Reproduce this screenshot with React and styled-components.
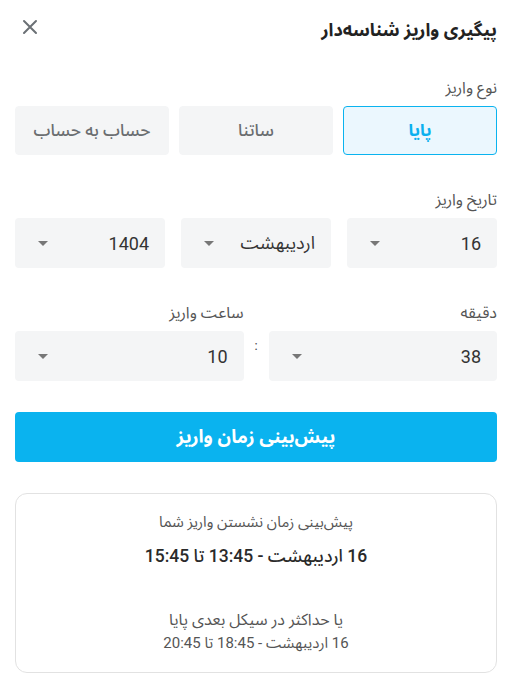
import React from "react";
import styled, { createGlobalStyle } from "styled-components";

const Global = createGlobalStyle`
  html, body { margin: 0; padding: 0; background: #fff; }
  body { font-family: Roboto, "Noto Sans Arabic", "Noto Sans Arabic UI", Vazirmatn, "Noto Naskh Arabic", sans-serif; }
  * { box-sizing: border-box; }
`;

const Page = styled.div`
  direction: rtl;
  width: 512px;
  padding: 0 15px;
  color: #333;
`;

const Header = styled.div`
  height: 60px;
  display: flex;
  align-items: center;
  justify-content: space-between;
`;

const Title = styled.h1`
  margin: 0;
  font-size: 18px;
  font-weight: 700;
  color: #222;
`;

const Close = styled.button`
  border: none;
  background: none;
  padding: 0;
  margin-left: 6px;
  width: 18px;
  height: 18px;
  display: flex;
  align-items: center;
  justify-content: center;
  cursor: pointer;
  margin-top: -6px;
`;

const Section = styled.div`
  margin-top: ${(p) => p.$mt}px;
`;

const Label = styled.div`
  font-size: 16px;
  line-height: 20px;
  color: #555;
  margin-bottom: 8px;
`;

const TypeRow = styled.div`
  display: grid;
  grid-template-columns: repeat(3, 1fr);
  gap: 10px;
`;

const TypeButton = styled.button`
  height: 49px;
  border-radius: 4px;
  font-family: inherit;
  font-size: 17px;
  font-weight: ${(p) => (p.$active ? 700 : 500)};
  color: ${(p) => (p.$active ? "#0ab0ef" : "#6a6d70")};
  background: ${(p) => (p.$active ? "#ebf7fe" : "#f4f5f6")};
  border: 1px solid ${(p) => (p.$active ? "#0ab3ef" : "#f4f5f6")};
  cursor: pointer;
`;

const SelectRow = styled.div`
  display: grid;
  grid-template-columns: repeat(3, 1fr);
  gap: 16px;
`;

const TimeRow = styled.div`
  display: grid;
  grid-template-columns: 1fr 25px 1fr;
`;

const TimeLabels = styled.div`
  display: grid;
  grid-template-columns: 1fr 25px 1fr;
  margin-bottom: 8px;
  font-size: 16px;
  line-height: 20px;
  color: #555;
`;

const Select = styled.div`
  height: 50px;
  background: #f4f5f6;
  border-radius: 4px;
  display: flex;
  align-items: center;
  justify-content: space-between;
  padding: 0 16px 0 23px;
  font-size: 18px;
  color: #333;
`;

const Colon = styled.div`
  text-align: center;
  font-size: 13px;
  color: #444;
  padding-top: 8px;
  line-height: 14px;
`;

const Primary = styled.button`
  display: block;
  width: 100%;
  height: 50px;
  margin-top: 31px;
  border: none;
  border-radius: 4px;
  background: #0ab3ef;
  color: #fff;
  font-family: inherit;
  font-size: 18.5px;
  font-weight: 700;
  cursor: pointer;
`;

const Card = styled.div`
  margin-top: 31px;
  height: 180px;
  border: 1px solid #e2e2e2;
  border-radius: 12px;
  display: flex;
  flex-direction: column;
  align-items: center;
  padding-top: 17px;
`;

const CardText = styled.div`
  font-size: ${(p) => p.$size || 15}px;
  font-weight: ${(p) => (p.$bold ? 500 : 400)};
  color: ${(p) => (p.$bold ? "#2a2a2a" : "#555")};
  line-height: 22px;
  margin-top: ${(p) => p.$mt || 0}px;
`;

const Arrow = () => (
  <svg width="10" height="5" viewBox="0 0 10 5">
    <path d="M0 0H10L5 5Z" fill="#777" />
  </svg>
);

const Dropdown = ({ value }) => (
  <Select>
    <span>{value}</span>
    <Arrow />
  </Select>
);

export default function App() {
  return (
    <>
      <Global />
      <Page>
        <Header>
          <Title>پیگیری واریز شناسه‌دار</Title>
          <Close aria-label="close">
            <svg width="16" height="16" viewBox="0 0 16 16">
              <path d="M2 2L14 14M14 2L2 14" stroke="#6b7075" strokeWidth="2" strokeLinecap="round" />
            </svg>
          </Close>
        </Header>

        <Section $mt={18}>
          <Label>نوع واریز</Label>
          <TypeRow>
            <TypeButton $active>پایا</TypeButton>
            <TypeButton>ساتنا</TypeButton>
            <TypeButton>حساب به حساب</TypeButton>
          </TypeRow>
        </Section>

        <Section $mt={35}>
          <Label>تاریخ واریز</Label>
          <SelectRow>
            <Dropdown value="16" />
            <Dropdown value="اردیبهشت" />
            <Dropdown value="1404" />
          </SelectRow>
        </Section>

        <Section $mt={35}>
          <TimeLabels>
            <span>دقیقه</span>
            <span />
            <span>ساعت واریز</span>
          </TimeLabels>
          <TimeRow>
            <Dropdown value="38" />
            <Colon>:</Colon>
            <Dropdown value="10" />
          </TimeRow>
        </Section>

        <Primary>پیش‌بینی زمان واریز</Primary>

        <Card>
          <CardText $size={15}>پیش‌بینی زمان نشستن واریز شما</CardText>
          <CardText $size={17.5} $bold $mt={12}>16 اردیبهشت - 13:45 تا 15:45</CardText>
          <CardText $size={16} $mt={42}>یا حداکثر در سیکل بعدی پایا</CardText>
          <CardText $size={15} $mt={1}>16 اردیبهشت - 18:45 تا 20:45</CardText>
        </Card>
      </Page>
    </>
  );
}
